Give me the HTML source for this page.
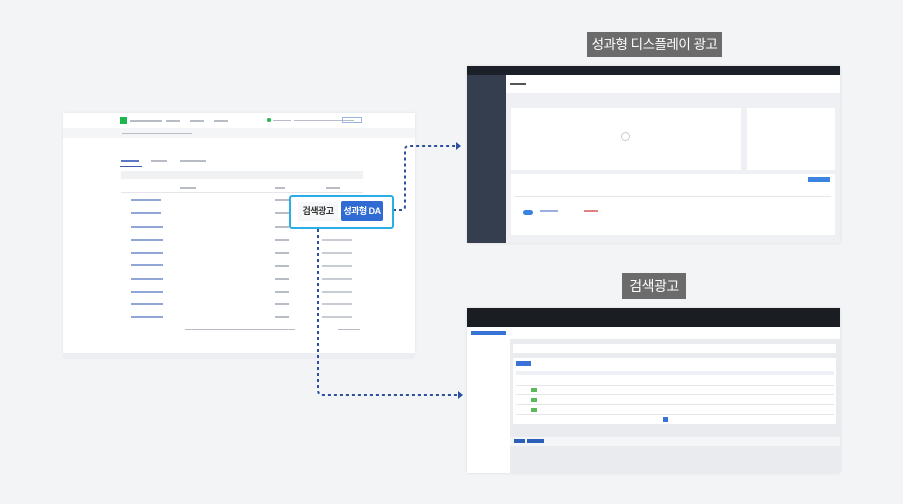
<!DOCTYPE html>
<html><head><meta charset="utf-8"><style>
*{margin:0;padding:0;box-sizing:border-box}
body{width:903px;height:504px;background:#f3f4f6;position:relative;overflow:hidden;font-family:"Liberation Sans","Noto Sans CJK KR",sans-serif}
.a{position:absolute}
.ln{position:absolute;height:2px;background:#e4e6ea}
.tx{position:absolute;height:2px;background:#b8bcc4}
.bl{position:absolute;height:2px;background:#8fa6d6}
.lab{white-space:nowrap;letter-spacing:-0.5px}
</style></head><body>
<div class="a" style="left:63px;top:113px;width:352px;height:240px;background:#fff;box-shadow:0 0 3px rgba(0,0,0,.08)"></div>
<div class="a" style="left:63px;top:128px;width:352px;height:10px;background:#f4f5f7"></div>
<div class="a" style="left:120px;top:117px;width:7px;height:7px;background:#1fb650"></div>
<div class="tx" style="left:130px;top:120px;width:32px"></div>
<div class="tx" style="left:166px;top:120px;width:14px"></div>
<div class="tx" style="left:190px;top:120px;width:14px"></div>
<div class="tx" style="left:214px;top:120px;width:14px"></div>
<div class="a" style="left:267px;top:118px;width:4px;height:4px;background:#1fb650;border-radius:2px"></div>
<div class="tx" style="left:273px;top:120px;width:18px;height:1px"></div>
<div class="tx" style="left:294px;top:120px;width:60px;height:1px"></div>
<div class="a" style="left:342px;top:117px;width:20px;height:6px;border:1px solid #9bb6e6"></div>
<div class="tx" style="left:122px;top:133px;width:70px;height:1px"></div>
<div class="tx" style="left:121px;top:160px;width:18px;background:#5a78c4"></div>
<div class="a" style="left:120px;top:166px;width:22px;height:1px;background:#3c5fb4"></div>
<div class="tx" style="left:151px;top:160px;width:16px"></div>
<div class="tx" style="left:180px;top:160px;width:26px"></div>
<div class="a" style="left:121px;top:171px;width:242px;height:8px;background:#f0f1f3"></div>
<div class="tx" style="left:180px;top:187px;width:16px"></div>
<div class="tx" style="left:275px;top:187px;width:10px"></div>
<div class="tx" style="left:326px;top:187px;width:14px"></div>
<div class="ln" style="left:121px;top:192px;width:242px;height:1px"></div>
<div class="bl" style="left:131px;top:199px;width:30px"></div><div class="tx" style="left:275px;top:199px;width:14px"></div>
<div class="bl" style="left:131px;top:212px;width:30px"></div><div class="tx" style="left:275px;top:212px;width:14px"></div>
<div class="bl" style="left:131px;top:226px;width:32px"></div><div class="tx" style="left:275px;top:226px;width:14px"></div>
<div class="bl" style="left:131px;top:239px;width:32px"></div><div class="tx" style="left:275px;top:239px;width:14px"></div>
<div class="bl" style="left:131px;top:252px;width:32px"></div><div class="tx" style="left:275px;top:252px;width:14px"></div>
<div class="bl" style="left:131px;top:264px;width:32px"></div><div class="tx" style="left:275px;top:265px;width:14px"></div>
<div class="bl" style="left:131px;top:278px;width:32px"></div><div class="tx" style="left:275px;top:278px;width:14px"></div>
<div class="bl" style="left:131px;top:291px;width:32px"></div><div class="tx" style="left:275px;top:291px;width:14px"></div>
<div class="bl" style="left:131px;top:303px;width:32px"></div><div class="tx" style="left:275px;top:303px;width:14px"></div>
<div class="bl" style="left:131px;top:316px;width:32px"></div><div class="tx" style="left:275px;top:316px;width:14px"></div>
<div class="tx" style="left:322px;top:239px;width:30px;background:#c8ccd3"></div>
<div class="tx" style="left:322px;top:252px;width:30px;background:#c8ccd3"></div>
<div class="tx" style="left:322px;top:265px;width:30px;background:#c8ccd3"></div>
<div class="tx" style="left:322px;top:278px;width:30px;background:#c8ccd3"></div>
<div class="tx" style="left:322px;top:291px;width:30px;background:#c8ccd3"></div>
<div class="tx" style="left:322px;top:303px;width:30px;background:#c8ccd3"></div>
<div class="tx" style="left:322px;top:316px;width:30px;background:#c8ccd3"></div>
<div class="tx" style="left:185px;top:329px;width:110px;height:1px"></div>
<div class="tx" style="left:338px;top:329px;width:22px;height:1px"></div>
<div class="a" style="left:63px;top:353px;width:352px;height:6px;background:#eceef1"></div>

<svg class="a" style="left:0;top:0" width="903" height="504">
<g fill="none" stroke="#2c4f9e" stroke-width="2" stroke-dasharray="3 3">
<path d="M393 210 H402 Q405 210 405 206 V150 Q405 146 409 146 H455"/>
<path d="M318 229 V390 Q318 395 323 395 H457"/>
</g>
<path d="M456 142 L461 146 L456 150Z" fill="#2c4f9e"/>
<path d="M458 391 L463 395 L458 399Z" fill="#2c4f9e"/>
</svg>

<div class="a" style="left:289px;top:195px;width:105px;height:34px;background:#fff;border:2px solid #2aaee6;border-radius:3px"></div>
<div class="a lab" style="left:298px;top:202px;width:40px;height:19px;background:#f6f7f8;font-size:9px;color:#333;text-align:center;line-height:19px;font-weight:bold">검색광고</div>
<div class="a lab" style="left:341px;top:201px;width:42px;height:20px;background:#2f6bd3;border-radius:2px;font-size:9px;color:#fff;text-align:center;line-height:20px;font-weight:bold">성과형 DA</div>

<div class="a lab" style="left:587px;top:32px;width:135px;height:25px;background:#6b6b6b;color:#fff;font-size:13.5px;text-align:center;line-height:25px">성과형 디스플레이 광고</div>
<div class="a lab" style="left:622px;top:273px;width:64px;height:26px;background:#6b6b6b;color:#fff;font-size:14px;text-align:center;line-height:26px">검색광고</div>

<div class="a" style="left:467px;top:66px;width:373px;height:177px;background:#eef0f3;box-shadow:0 0 3px rgba(0,0,0,.1)"></div>
<div class="a" style="left:467px;top:66px;width:373px;height:9px;background:#1c2129"></div>
<div class="a" style="left:467px;top:75px;width:39px;height:168px;background:#353e4e"></div>
<div class="a" style="left:506px;top:75px;width:334px;height:18px;background:#fff"></div>
<div class="tx" style="left:510px;top:83px;width:16px;background:#555"></div>
<div class="a" style="left:511px;top:108px;width:230px;height:62px;background:#fff"></div>
<div class="a" style="left:747px;top:108px;width:88px;height:62px;background:#fff"></div>
<div class="a" style="left:621px;top:132px;width:9px;height:9px;border:1px solid #ccc;border-radius:50%"></div>
<div class="a" style="left:511px;top:174px;width:324px;height:61px;background:#fff"></div>
<div class="a" style="left:808px;top:177px;width:22px;height:5px;background:#3a83e0"></div>
<div class="ln" style="left:515px;top:196px;width:316px;height:1px"></div>
<div class="a" style="left:523px;top:210px;width:10px;height:5px;background:#3a83e0;border-radius:3px"></div>
<div class="tx" style="left:540px;top:210px;width:18px;background:#9bb0de"></div>
<div class="tx" style="left:584px;top:210px;width:14px;background:#e08080"></div>

<div class="a" style="left:467px;top:308px;width:373px;height:165px;background:#e9ebee;box-shadow:0 0 3px rgba(0,0,0,.1)"></div>
<div class="a" style="left:467px;top:308px;width:373px;height:19px;background:#1a1d22"></div>
<div class="a" style="left:467px;top:327px;width:43px;height:146px;background:#fff"></div>
<div class="a" style="left:471px;top:331px;width:35px;height:4px;background:#3a73d8"></div>
<div class="a" style="left:510px;top:327px;width:330px;height:12px;background:#fff"></div>
<div class="a" style="left:513px;top:344px;width:323px;height:9px;background:#fff"></div>
<div class="a" style="left:513px;top:358px;width:323px;height:66px;background:#fff"></div>
<div class="a" style="left:516px;top:361px;width:15px;height:5px;background:#3a73d8"></div>
<div class="ln" style="left:516px;top:371px;width:318px;height:4px;background:#edf0f4"></div>
<div class="ln" style="left:516px;top:385px;width:318px;height:1px"></div>
<div class="ln" style="left:516px;top:394px;width:318px;height:1px"></div>
<div class="ln" style="left:516px;top:404px;width:318px;height:1px"></div>
<div class="ln" style="left:516px;top:414px;width:318px;height:1px"></div>
<div class="a" style="left:531px;top:388px;width:6px;height:4px;background:#5cb85c"></div>
<div class="a" style="left:531px;top:398px;width:6px;height:4px;background:#5cb85c"></div>
<div class="a" style="left:531px;top:408px;width:6px;height:4px;background:#5cb85c"></div>
<div class="a" style="left:663px;top:417px;width:5px;height:5px;background:#3a73d8"></div>
<div class="a" style="left:510px;top:437px;width:330px;height:9px;background:#f4f5f7"></div>
<div class="a" style="left:514px;top:439px;width:11px;height:4px;background:#2e5fb8"></div>
<div class="a" style="left:527px;top:439px;width:17px;height:4px;background:#2e5fb8"></div>
</body></html>
